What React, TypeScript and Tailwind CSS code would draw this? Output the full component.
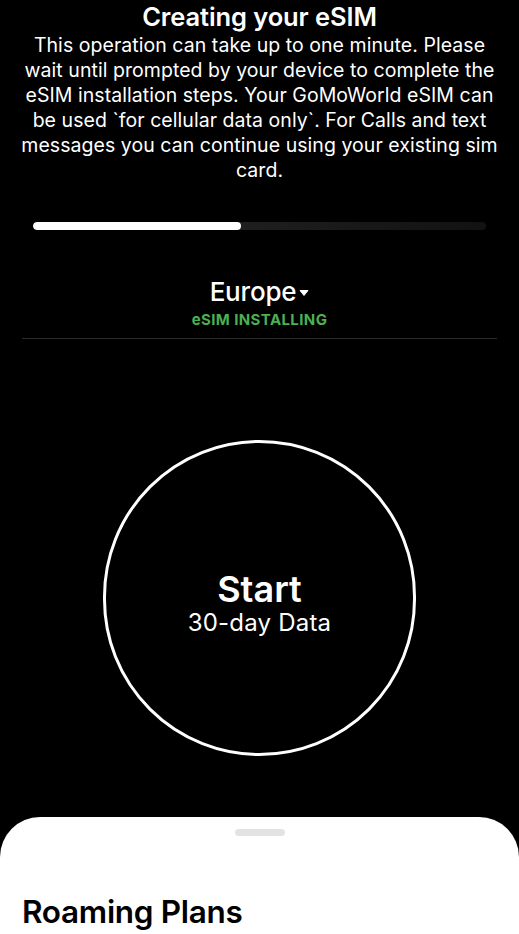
import React from "react";

export default function App() {
  return (
    <div
      className="w-[519px] h-[934px] bg-black text-white overflow-hidden flex flex-col"
      style={{ fontFamily: "Inter, 'Noto Sans', sans-serif" }}
    >
      <div className="flex flex-col items-center px-[20px] pt-[1px]">
        <h1 className="text-[25.5px] leading-[32px] font-semibold tracking-[-0.1px]">Creating your eSIM</h1>
        <p className="text-[19.5px] leading-[25px] text-center tracking-[0.05px]">
          This operation can take up to one minute. Please wait until prompted by your device to complete the eSIM installation steps. Your GoMoWorld eSIM can be used `for cellular data only`. For Calls and text messages you can continue using your existing sim card.
        </p>
      </div>
      <div className="mx-[33px] mt-[39px] h-[8px] rounded-full bg-gradient-to-r from-[#2a2a2a] to-[#121212] overflow-hidden">
        <div className="h-full w-[46%] bg-white rounded-full" />
      </div>
      <div className="flex flex-col items-center mt-[45px]">
        <div className="flex items-center">
          <span className="text-[26px] leading-[34px] font-medium tracking-[-0.2px]">Europe</span>
          <svg width="10" height="8" viewBox="0 0 10 8" className="ml-[3px] mt-[2px]">
            <path d="M1 1.5 L9 1.5 L5 6.5 Z" fill="white" stroke="white" strokeLinejoin="round" strokeWidth="1" />
          </svg>
        </div>
        <span className="text-[15px] leading-[18px] font-bold text-[#4caf50] tracking-[0.4px] mt-[2px]">eSIM INSTALLING</span>
      </div>
      <div className="mx-[22px] mt-[9px] h-px bg-[#2a2a2a]" />
      <div className="flex-1 flex items-center justify-center pt-[40px]">
        <div className="w-[313px] h-[316px] rounded-full border-[3px] border-white flex flex-col items-center justify-center">
          <span className="text-[36px] leading-[40px] font-semibold mt-[9px]">Start</span>
          <span className="text-[24px] leading-[28px] tracking-[0.2px]">30-day Data</span>
        </div>
      </div>
      <div className="h-[117px] bg-white rounded-t-[40px] flex flex-col text-black">
        <div className="mx-auto mt-[12px] w-[50px] h-[7px] rounded-full bg-[#e3e3e3]" />
        <h2 className="ml-[22px] mt-[58px] text-[31.5px] leading-[36px] font-semibold tracking-[-0.3px]">Roaming Plans</h2>
      </div>
    </div>
  );
}
